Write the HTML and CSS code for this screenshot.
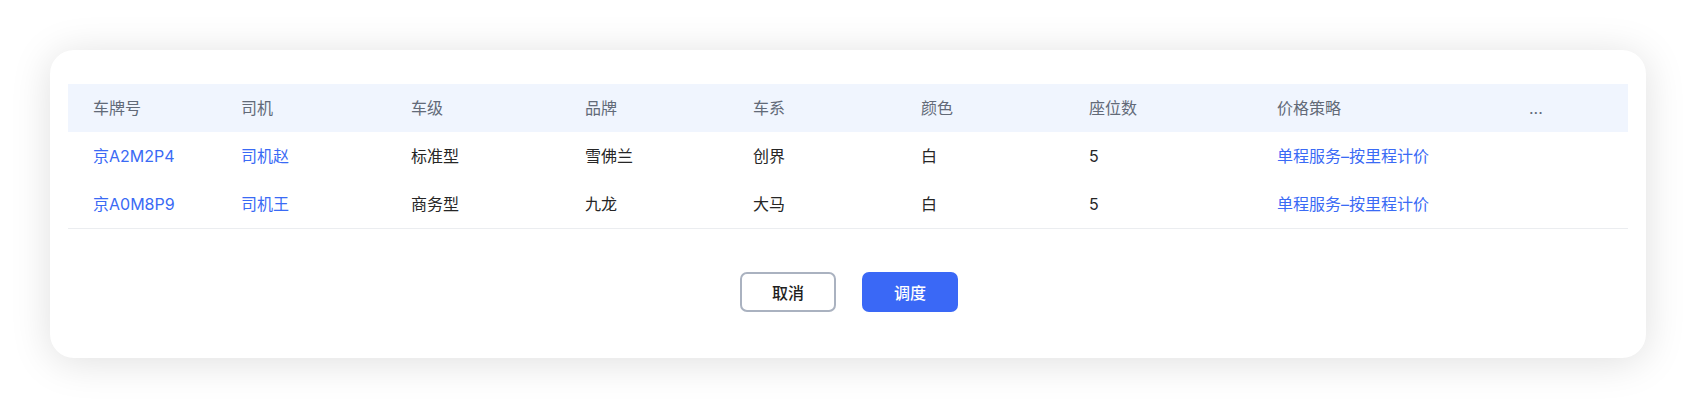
FILE: index.html
```html
<!DOCTYPE html>
<html lang="zh-CN">
<head>
<meta charset="utf-8">
<title>调度车辆</title>
<link rel="stylesheet" href="styles.css">
</head>
<body>
<div class="card">
  <table class="grid">
    <colgroup>
      <col class="c1"><col class="c2"><col class="c3"><col class="c4"><col class="c5"><col class="c6"><col class="c7"><col class="c8"><col class="c9">
    </colgroup>
    <thead>
      <tr>
        <th>车牌号</th><th>司机</th><th>车级</th><th>品牌</th><th>车系</th><th>颜色</th><th>座位数</th><th>价格策略</th><th class="more">...</th>
      </tr>
    </thead>
    <tbody>
      <tr>
        <td class="link">京A2M2P4</td><td class="link">司机赵</td><td>标准型</td><td>雪佛兰</td><td>创界</td><td>白</td><td>5</td><td class="link">单程服务–按里程计价</td><td></td>
      </tr>
      <tr class="last">
        <td class="link">京A0M8P9</td><td class="link">司机王</td><td>商务型</td><td>九龙</td><td>大马</td><td>白</td><td>5</td><td class="link">单程服务–按里程计价</td><td></td>
      </tr>
    </tbody>
  </table>
  <div class="actions">
    <button class="btn btn-cancel">取消</button>
    <button class="btn btn-primary">调度</button>
  </div>
</div>
</body>
</html>
```

FILE: styles.css
```css
html, body {
  margin: 0;
  padding: 0;
  background: #ffffff;
}

body {
  font-family: "Inter", "Noto Sans CJK SC", sans-serif;
  font-size: 16px;
  color: #262626;
}

.card {
  margin: 50px;
  padding: 34px 18px 46px;
  background: #ffffff;
  border-radius: 24px;
  box-shadow: 0 4px 40px rgba(0, 0, 0, 0.13);
}

.grid {
  width: 100%;
  border-collapse: collapse;
  table-layout: fixed;
}

.c1 { width: 148px; }
.c2 { width: 170px; }
.c3 { width: 174px; }
.c4 { width: 168px; }
.c5 { width: 168px; }
.c6 { width: 168px; }
.c7 { width: 188px; }
.c8 { width: 252px; }

.grid th,
.grid td {
  height: 48px;
  padding: 0 0 0 25px;
  text-align: left;
  vertical-align: middle;
  line-height: 24px;
  white-space: nowrap;
}

.grid thead tr {
  background: #f0f5fe;
}

.grid th {
  font-weight: 400;
  color: #626a78;
}

.grid td {
  color: #262626;
}

.grid td.link {
  color: #3a6af5;
}

.grid tr.last td {
  border-bottom: 1px solid #ebedf0;
}

.actions {
  display: flex;
  justify-content: center;
  gap: 26px;
  margin-top: 43px;
  padding-left: 2px;
}

.btn {
  width: 96px;
  height: 40px;
  border-radius: 7px;
  font-family: "Inter", "Noto Sans CJK SC", sans-serif;
  font-size: 16px;
  font-weight: 500;
  cursor: pointer;
  box-sizing: border-box;
}

.btn-cancel {
  background: #ffffff;
  border: 2px solid #aab2c0;
  color: #1f1f1f;
}

.btn-primary {
  background: #3a68f6;
  border: none;
  color: #ffffff;
}
```
